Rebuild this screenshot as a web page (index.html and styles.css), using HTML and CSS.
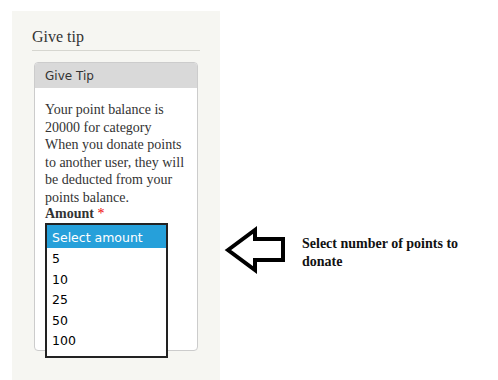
FILE: index.html
```html
<!DOCTYPE html>
<html>
<head>
<meta charset="utf-8">
<link rel="stylesheet" href="styles.css">
</head>
<body>
<div class="page">
  <div class="sidebar">
    <h2 class="block-title">Give tip</h2>
    <div class="card">
      <div class="card-head">Give Tip</div>
      <div class="card-body">
        <p class="info">Your point balance is 20000 for category When you donate points to another user, they will be deducted from your points balance.</p>
        <div class="label">Amount <span class="req">*</span></div>
        <div class="listbox">
          <div class="opt opt-sel">Select amount</div>
          <div class="opt">5</div>
          <div class="opt">10</div>
          <div class="opt">25</div>
          <div class="opt">50</div>
          <div class="opt">100</div>
        </div>
      </div>
    </div>
  </div>
  <div class="callout">
    <svg class="arrow" width="62" height="50" viewBox="0 0 62 50">
      <polygon points="5,26 32,6 32,15 60,15 60,36 32,36 32,46" fill="none" stroke="#000" stroke-width="4" stroke-linejoin="miter"/>
    </svg>
    <div class="callout-text">Select number of points to donate</div>
  </div>
</div>
</body>
</html>
```
FILE: styles.css
```css
html, body {
  margin: 0;
  padding: 0;
  background: #fff;
}
.page {
  display: flex;
  align-items: flex-start;
  padding: 11px 0 0 12px;
}
.sidebar {
  width: 168px;
  min-height: 369px;
  padding: 0 20px;
  background: #f6f6f2;
  box-sizing: content-box;
}
.block-title {
  margin: 0;
  padding: 18px 0 5px;
  font-family: "Liberation Serif", serif;
  font-weight: normal;
  font-size: 16px;
  line-height: 16px;
  color: #333;
  border-bottom: 1px solid #d6d6d0;
}
.card {
  margin: 11px 2px 0;
  border: 1px solid #ccc;
  border-radius: 4px;
  background: #fff;
  height: 287px;
}
.card-head {
  height: 25px;
  line-height: 26px;
  padding: 0 10px;
  background: #d9d9d9;
  border-radius: 3px 3px 0 0;
  font-family: "DejaVu Sans", sans-serif;
  font-size: 12px;
  color: #333;
}
.card-body {
  padding: 13px 10px 0;
}
.info {
  margin: 0;
  font-family: "Liberation Serif", serif;
  font-size: 14px;
  line-height: 17.5px;
  color: #333;
}
.label {
  font-family: "Liberation Serif", serif;
  font-weight: bold;
  font-size: 14px;
  line-height: 15px;
  color: #333;
}
.req {
  color: #e00;
  font-weight: normal;
}
.listbox {
  margin-top: 2px;
  width: 119px;
  border: 2px solid #222;
  background: #fff;
  padding-bottom: 5px;
  position: relative;
  z-index: 1;
}
.opt {
  height: 20.6px;
  line-height: 22px;
  padding-left: 5px;
  font-family: "DejaVu Sans", sans-serif;
  font-size: 12.5px;
  color: #000;
}
.opt-sel {
  height: 23px;
  line-height: 25px;
  background: #26a0da;
  color: #fff;
}
.callout {
  display: flex;
  align-items: center;
  margin-top: 213px;
  margin-left: 3px;
}
.arrow {
  display: block;
  flex: none;
}
.callout-text {
  width: 180px;
  margin-left: 17px;
  padding-top: 7px;
  font-family: "Liberation Serif", serif;
  font-weight: bold;
  font-size: 14px;
  line-height: 18px;
  color: #111;
}
```
